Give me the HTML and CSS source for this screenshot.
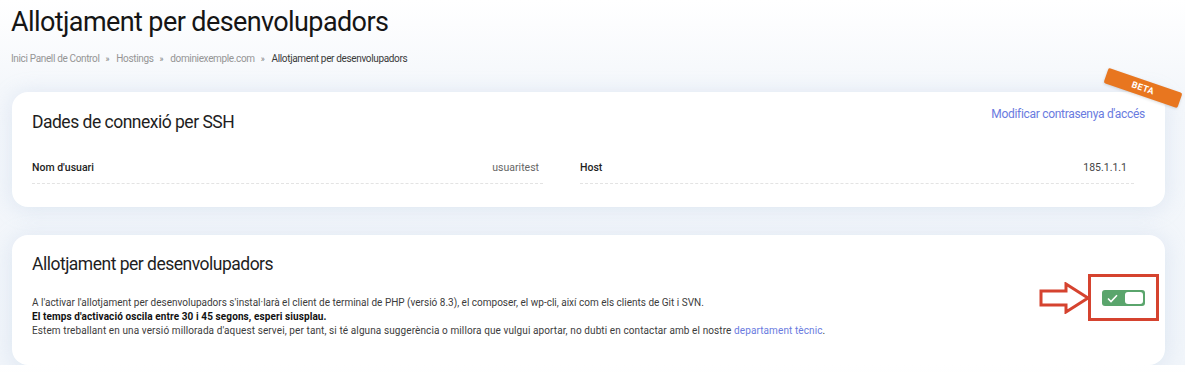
FILE: index.html
```html
<!DOCTYPE html>
<html lang="ca">
<head>
    <meta charset="UTF-8">
    <meta name="viewport" content="width=device-width, initial-scale=1.0">
    <title>Allotjament per desenvolupadors</title>
    <link rel="stylesheet" href="styles.css">
</head>
<body>
    <div class="page">
        <h1>Allotjament per desenvolupadors</h1>
        <div class="breadcrumb">
            <a href="#">Inici Panell de Control</a><span class="sep">»</span>
            <a href="#">Hostings</a><span class="sep">»</span>
            <a href="#">dominiexemple.com</a><span class="sep">»</span>
            <span class="current">Allotjament per desenvolupadors</span>
        </div>

        <div class="card ssh">
            <div class="ribbon">BETA</div>
            <div class="card-head">
                <h2>Dades de connexió per SSH</h2>
                <a href="#" class="link">Modificar contrasenya d'accés</a>
            </div>
            <div class="rows">
                <div class="row"><span class="label">Nom d'usuari</span><span class="value">usuaritest</span></div>
                <div class="row"><span class="label">Host</span><span class="value">185.1.1.1</span></div>
            </div>
        </div>

        <div class="card dev">
            <h2>Allotjament per desenvolupadors</h2>
            <div class="dev-body">
                <p class="text">
                    A l'activar l'allotjament per desenvolupadors s'instal·larà el client de terminal de PHP (versió 8.3), el composer, el wp-cli, així com els clients de Git i SVN.<br>
                    <b>El temps d'activació oscila entre 30 i 45 segons, esperi siusplau.</b><br>
                    <span class="more">Estem treballant en una versió millorada d'aquest servei, per tant, si té alguna suggerència o millora que vulgui aportar, no dubti en contactar amb el nostre <a href="#" class="link">departament tècnic</a>.</span>
                </p>
                <div class="toggle-wrap">
                    <svg class="arrow" width="52" height="32" viewBox="0 0 52 32">
                        <path d="M2 9 H27 V2 L49 16 L27 30 V23 H2 Z" fill="#fff" stroke="#d5432f" stroke-width="3" stroke-linejoin="miter"/>
                    </svg>
                    <div class="mark"></div>
                    <div class="toggle">
                        <svg class="check" width="11" height="9" viewBox="0 0 11 9">
                            <path d="M1 4.5 L4 7.5 L10 1.2" fill="none" stroke="#fff" stroke-width="1.6"/>
                        </svg>
                        <span class="knob"></span>
                    </div>
                </div>
            </div>
        </div>
    </div>
</body>
</html>
```

FILE: styles.css
```css
body {
    margin: 0;
    font-family: Roboto, "Liberation Sans", sans-serif;
    background: linear-gradient(180deg, #ffffff 0px, #f4f7fb 90px, #f1f5fa 100%);
    color: #222;
}
.page {
    padding: 0 20px 0 12px;
}
h1 {
    margin: 0 0 0 -1px;
    padding-top: 5px;
    font-size: 27px;
    font-weight: 400;
    line-height: 35px;
    letter-spacing: -0.6px;
    color: #151515;
}
.breadcrumb {
    margin: 12px 0 0 -1px;
    font-size: 10px;
    letter-spacing: -0.35px;
    color: #959595;
    line-height: 13px;
}
.breadcrumb a {
    color: #959595;
    text-decoration: none;
}
.breadcrumb .sep {
    font-size: 8.5px;
    margin: 0 5px 0 6px;
    color: #777;
}
.breadcrumb .current {
    color: #3a3a3a;
}
.card {
    position: relative;
    background: #fff;
    border-radius: 16px;
    box-shadow: 0 2px 22px rgba(160, 185, 220, 0.28);
}
.ssh {
    margin-top: 26px;
    height: 115px;
    box-sizing: border-box;
    padding: 14px 20px 0 20px;
}
.dev {
    margin-top: 28px;
    height: 130px;
    box-sizing: border-box;
    padding: 18px 20px 0 20px;
}
.ribbon {
    position: absolute;
    right: -17px;
    top: -12px;
    width: 78px;
    height: 16px;
    background: #e8761f;
    color: #fff;
    font-size: 9px;
    font-weight: 700;
    line-height: 16px;
    text-align: center;
    letter-spacing: 0.3px;
    border-radius: 2px;
    transform: rotate(19deg);
    box-shadow: 0 1px 3px rgba(0, 0, 0, 0.15);
}
.card-head {
    display: flex;
    justify-content: space-between;
    align-items: flex-start;
}
h2 {
    margin: 0;
    font-size: 17.5px;
    font-weight: 400;
    line-height: 22px;
    letter-spacing: -0.5px;
    color: #1e1e1e;
}
.ssh h2 {
    margin-top: 5px;
}
.link {
    color: #6a7be0;
    text-decoration: none;
}
.card-head .link {
    font-size: 12px;
    line-height: 16px;
    letter-spacing: -0.3px;
}
.rows {
    display: grid;
    grid-template-columns: 511px 554px;
    column-gap: 37px;
    margin-top: 28px;
}
.row {
    display: flex;
    justify-content: space-between;
    font-size: 10.5px;
    line-height: 13px;
    padding: 0 4px 9px 0;
    border-bottom: 1px dashed #e3e3e3;
}
.row:last-child {
    padding-right: 7px;
}
.label {
    font-weight: 500;
    color: #1e1e1e;
}
.value {
    color: #666;
}
.row:last-child .value {
    color: #444;
}
.dev-body {
    display: flex;
    justify-content: space-between;
    align-items: flex-start;
    margin-top: 21px;
}
.text {
    margin: 0;
    font-size: 10px;
    line-height: 14px;
    color: #3c3c3c;
}
.text b {
    color: #111;
    font-weight: 700;
    letter-spacing: 0.1px;
}
.text .more {
    letter-spacing: 0.1px;
}
.toggle-wrap {
    position: relative;
    margin-top: -6px;
}
.toggle {
    display: flex;
    align-items: center;
    justify-content: space-between;
    width: 43px;
    height: 16px;
    box-sizing: border-box;
    padding: 2px;
    background: #5aa56c;
    border-radius: 3px;
}
.check {
    margin-left: 3px;
}
.knob {
    width: 18px;
    height: 12px;
    background: #fff;
    border-radius: 3px;
}
.mark {
    position: absolute;
    left: -14px;
    top: -16px;
    width: 71px;
    height: 47px;
    box-sizing: border-box;
    border: 3px solid #d5432f;
}
.arrow {
    position: absolute;
    left: -63px;
    top: -8px;
}
```
